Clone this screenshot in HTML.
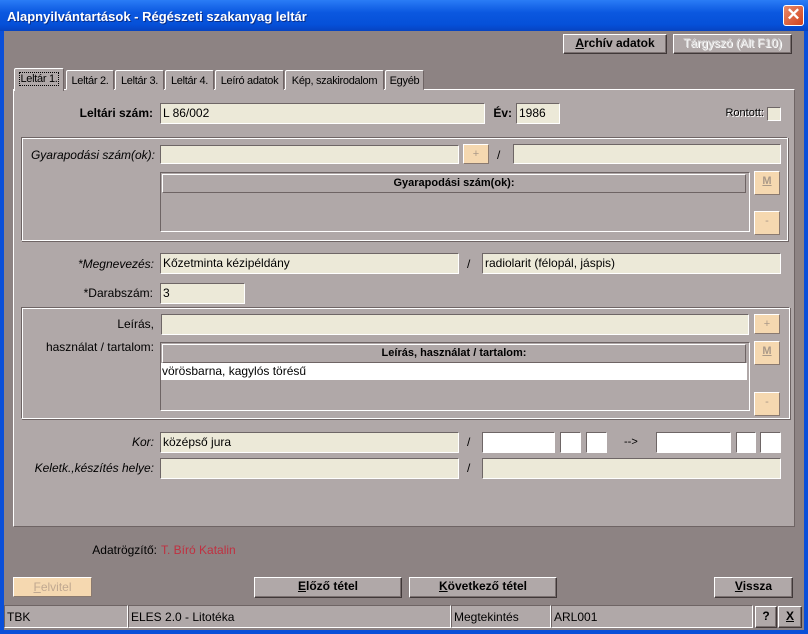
<!DOCTYPE html>
<html><head><meta charset="utf-8"><style>
*{box-sizing:border-box;margin:0;padding:0}
body{width:808px;height:634px;overflow:hidden;background:#0a4fd8;font-family:"Liberation Sans",sans-serif;font-size:11px;position:relative}
.a{position:absolute;white-space:nowrap}
#title{left:0;top:0;width:808px;height:31px;background:linear-gradient(#2a7cf6,#0b58e0 40%,#0550d8 80%,#0643c0);color:#fff;font-weight:bold;font-size:13px;padding:9px 0 0 7px;text-shadow:1px 1px #0a2e8a}
#close{left:783px;top:5px;width:21px;height:21px;background:linear-gradient(135deg,#e88a6a,#d2421c);border:1px solid #fff;border-radius:3px;color:#fff;font-size:17px;text-align:center;line-height:18px;font-weight:bold}
#win{left:4px;top:31px;width:800px;height:599px;background:#8d8383}
.page{background:#b0a8a8;border:1px solid;border-color:#fff #6e6464 #6e6464 #fff}
.in{background:#ece9d8;border:1px solid;border-color:#6e6666 #fff #fff #6e6666;padding:2px 2px;font-size:12px;color:#000}
.w{background:#fff}
.btn{background:#b0a8a8;border:1px solid;border-color:#fff #403838 #403838 #fff;box-shadow:inset -1px -1px #7a7070;text-align:center;font-weight:bold;font-size:12px;line-height:17px}
.dis{color:#ddd;text-shadow:1px 1px #fff}
.pb{background:#f5d8b0;border:1px solid;border-color:#fff #8a7a70 #8a7a70 #fff;text-align:center;color:#aa9988;font-size:11px;line-height:19px}
.lbl{text-align:right;font-size:12px;color:#000}
.i{font-style:italic}
.grp{border:1px solid;border-color:#6e6464 #fff #fff #6e6464;box-shadow:inset 1px 1px #fff,1px 1px #6e6464}
.tab{top:70px;height:20px;background:#b0a8a8;border:1px solid;border-color:#fff #6e6464 transparent #fff;font-size:11px;padding:4px 0 0;text-align:center;letter-spacing:-0.3px;border-radius:2px 2px 0 0}
.gh{background:#b0a8a8;border:1px solid;border-color:#fff #6e6464 #6e6464 #fff;text-align:center;font-weight:bold;font-size:11px;line-height:16px}
.gb{border:1px solid;border-color:#6e6464 #fff #fff #6e6464}
.st{top:605px;height:23px;border:1px solid;border-color:#6e6464 #fff #fff #6e6464;background:#b0a8a8;font-size:12px;padding:4px 2px}
</style></head><body>
<div id="title" class="a">Alapnyilvántartások - Régészeti szakanyag leltár</div>
<div id="close" class="a">✕</div>
<div id="win" class="a"></div>
<div class="a btn" style="left:563px;top:34px;width:104px;height:20px"><u>A</u>rchív adatok</div>
<div class="a btn dis" style="left:673px;top:34px;width:119px;height:20px;font-weight:normal">Tárgyszó (Alt F10)</div>
<div class="a page" style="left:13px;top:89px;width:782px;height:438px"></div>
<div class="a tab" style="left:14px;top:68px;height:23px;width:50px;background:#b0a8a8;z-index:2;border-bottom:none"><span style="outline:1px dotted #000">Leltár 1.</span></div>
<div class="a tab" style="left:66px;width:48px">Leltár 2.</div>
<div class="a tab" style="left:115px;width:49px">Leltár 3.</div>
<div class="a tab" style="left:165px;width:49px">Leltár 4.</div>
<div class="a tab" style="left:215px;width:69px">Leíró adatok</div>
<div class="a tab" style="left:285px;width:99px">Kép, szakirodalom</div>
<div class="a tab" style="left:385px;width:39px">Egyéb</div>

<div class="a lbl" style="left:40px;top:106px;width:113px;font-weight:bold">Leltári szám:</div>
<div class="a in" style="left:160px;top:103px;width:325px;height:21px">L 86/002</div>
<div class="a lbl" style="left:480px;top:106px;width:32px;font-weight:bold">Év:</div>
<div class="a in" style="left:516px;top:103px;width:44px;height:21px">1986</div>
<div class="a lbl dis" style="left:700px;top:107px;width:64px;font-size:11px">Rontott:</div>
<div class="a in" style="left:767px;top:107px;width:14px;height:14px"></div>

<div class="a grp" style="left:21px;top:137px;width:767px;height:104px"></div>
<div class="a lbl i" style="left:20px;top:148px;width:135px">Gyarapodási szám(ok):</div>
<div class="a in" style="left:160px;top:145px;width:299px;height:19px"></div>
<div class="a pb" style="left:463px;top:144px;width:26px;height:20px">+</div>
<div class="a" style="left:497px;top:148px;font-size:12px">/</div>
<div class="a in" style="left:513px;top:144px;width:268px;height:20px"></div>
<div class="a gb" style="left:160px;top:172px;width:590px;height:60px"></div>
<div class="a gh" style="left:162px;top:174px;width:584px;height:19px">Gyarapodási szám(ok):</div>
<div class="a pb" style="left:754px;top:171px;width:26px;height:24px;font-weight:bold"><u>M</u></div>
<div class="a pb" style="left:754px;top:211px;width:26px;height:24px">-</div>

<div class="a lbl i" style="left:40px;top:257px;width:114px">*Megnevezés:</div>
<div class="a in" style="left:160px;top:253px;width:299px;height:21px">Kőzetminta kézipéldány</div>
<div class="a" style="left:467px;top:257px;font-size:12px">/</div>
<div class="a in" style="left:482px;top:253px;width:299px;height:21px">radiolarit (félopál, jáspis)</div>
<div class="a lbl" style="left:40px;top:286px;width:113px">*Darabszám:</div>
<div class="a in" style="left:160px;top:283px;width:85px;height:21px">3</div>

<div class="a grp" style="left:21px;top:307px;width:769px;height:112px"></div>
<div class="a lbl" style="left:40px;top:317px;width:114px">Leírás,</div>
<div class="a lbl" style="left:20px;top:340px;width:134px">használat / tartalom:</div>
<div class="a in" style="left:161px;top:314px;width:588px;height:21px"></div>
<div class="a pb" style="left:754px;top:314px;width:26px;height:20px">+</div>
<div class="a gb" style="left:160px;top:342px;width:590px;height:69px"></div>
<div class="a gh" style="left:162px;top:344px;width:584px;height:19px">Leírás, használat / tartalom:</div>
<div class="a" style="left:161px;top:363px;width:586px;height:17px;background:#fff;font-size:12px;padding:1px 1px">vörösbarna, kagylós törésű</div>
<div class="a pb" style="left:754px;top:341px;width:26px;height:24px;font-weight:bold"><u>M</u></div>
<div class="a pb" style="left:754px;top:392px;width:26px;height:24px">-</div>

<div class="a lbl i" style="left:40px;top:435px;width:114px">Kor:</div>
<div class="a in" style="left:160px;top:432px;width:299px;height:21px">középső jura</div>
<div class="a" style="left:467px;top:435px;font-size:12px">/</div>
<div class="a in w" style="left:482px;top:432px;width:73px;height:21px"></div>
<div class="a in w" style="left:560px;top:432px;width:21px;height:21px"></div>
<div class="a in w" style="left:586px;top:432px;width:21px;height:21px"></div>
<div class="a" style="left:624px;top:436px;font-size:11px">--></div>
<div class="a in w" style="left:656px;top:432px;width:75px;height:21px"></div>
<div class="a in w" style="left:736px;top:432px;width:20px;height:21px"></div>
<div class="a in w" style="left:760px;top:432px;width:21px;height:21px"></div>
<div class="a lbl i" style="left:20px;top:461px;width:134px">Keletk.,készítés helye:</div>
<div class="a in" style="left:160px;top:458px;width:299px;height:21px"></div>
<div class="a" style="left:467px;top:461px;font-size:12px">/</div>
<div class="a in" style="left:482px;top:458px;width:299px;height:21px"></div>

<div class="a lbl" style="left:40px;top:543px;width:117px">Adatrögzítő:</div>
<div class="a" style="left:161px;top:543px;font-size:12px;color:#c03040">T. Bíró Katalin</div>

<div class="a pb" style="left:13px;top:577px;width:79px;height:20px;font-size:12px;color:#c0a890;line-height:18px"><u>F</u>elvitel</div>
<div class="a btn" style="left:254px;top:577px;width:148px;height:21px"><u>E</u>lőző tétel</div>
<div class="a btn" style="left:409px;top:577px;width:148px;height:21px"><u>K</u>övetkező tétel</div>
<div class="a btn" style="left:714px;top:577px;width:79px;height:21px"><u>V</u>issza</div>

<div class="a st" style="left:4px;width:124px">TBK</div>
<div class="a st" style="left:128px;width:323px">ELES 2.0 - Litotéka</div>
<div class="a st" style="left:451px;width:100px">Megtekintés</div>
<div class="a st" style="left:551px;width:202px">ARL001</div>
<div class="a btn" style="left:755px;top:606px;width:22px;height:22px;line-height:19px">?</div>
<div class="a btn" style="left:778px;top:606px;width:24px;height:22px;line-height:19px"><u>X</u></div>
</body></html>
